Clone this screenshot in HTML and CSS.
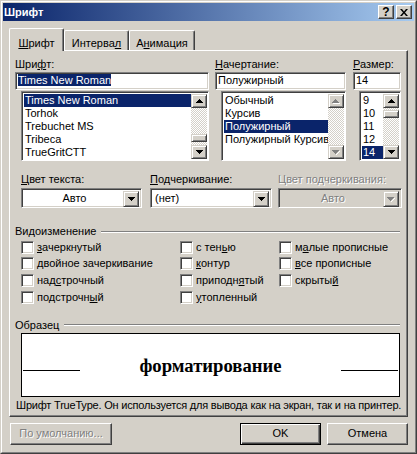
FILE: index.html
```html
<!DOCTYPE html>
<html lang="ru">
  <head>
    <meta charset="UTF-8" />
    <title>Шрифт</title>
    <link rel="stylesheet" href="styles.css">
  </head>

  <body>
    <div class="window">
      <div class="frame">
        <div class="titlebar">
          <span class="title">Шрифт</span>
          <div class="title-buttons">
            <span class="tbtn help">?</span>
            <span class="tbtn">
              <svg width="8" height="7" viewBox="0 0 8 7"><path d="M0 0h2l2 2.5L6 0h2L5 3.5 8 7H6L4 4.5 2 7H0l3-3.5z" /></svg>
            </span>
          </div>
        </div>

        <div class="content">
          <div class="tabs">
            <div class="tab tab-font active"><u>Ш</u>рифт</div>
            <div class="tab tab-space">Интерва<u>л</u></div>
            <div class="tab tab-anim">А<u>н</u>имация</div>
          </div>

          <div class="panel">
            <div class="font-row">
              <div class="col">
                <div class="label">Шри<u>ф</u>т:</div>
                <div class="edit"><span class="sel">Times New Roman</span></div>
                <div class="list">
                  <div class="items">
                    <div class="item selected">Times New Roman</div>
                    <div class="item">Torhok</div>
                    <div class="item">Trebuchet MS</div>
                    <div class="item">Tribeca</div>
                    <div class="item">TrueGritCTT</div>
                  </div>
                  <div class="scrollbar">
                    <div class="sbtn"><svg width="7" height="4" viewBox="0 0 7 4"><path d="M3 0h1v1h1v1h1v1h1v1H0V3h1V2h1V1h1z" /></svg></div>
                    <div class="track"><div class="thumb thumb-font"></div></div>
                    <div class="sbtn"><svg width="7" height="4" viewBox="0 0 7 4"><path d="M0 0h7v1H6v1H5v1H4v1H3V3H2V2H1V1H0z" /></svg></div>
                  </div>
                </div>
              </div>

              <div class="col">
                <div class="label"><u>Н</u>ачертание:</div>
                <div class="edit">Полужирный</div>
                <div class="list">
                  <div class="items">
                    <div class="item">Обычный</div>
                    <div class="item">Курсив</div>
                    <div class="item selected">Полужирный</div>
                    <div class="item">Полужирный Курсив</div>
                  </div>
                  <div class="scrollbar">
                    <div class="sbtn disabled"><svg width="8" height="5" viewBox="0 0 8 5"><path class="hl" d="M4 1h1v1h1v1h1v1h1v1H1V4h6V3H6V2H5V1z" /><path d="M3 0h1v1h1v1h1v1h1v1H0V3h1V2h1V1h1z" /></svg></div>
                    <div class="track"></div>
                    <div class="sbtn disabled"><svg width="8" height="5" viewBox="0 0 8 5"><path class="hl" d="M7 1h1v1H7v1H6v1H5v1H4V4h1V3h1V2h1z" /><path d="M0 0h7v1H6v1H5v1H4v1H3V3H2V2H1V1H0z" /></svg></div>
                  </div>
                </div>
              </div>

              <div class="col">
                <div class="label"><u>Р</u>азмер:</div>
                <div class="edit">14</div>
                <div class="list">
                  <div class="items">
                    <div class="item">9</div>
                    <div class="item">10</div>
                    <div class="item">11</div>
                    <div class="item">12</div>
                    <div class="item selected">14</div>
                  </div>
                  <div class="scrollbar">
                    <div class="sbtn"><svg width="7" height="4" viewBox="0 0 7 4"><path d="M3 0h1v1h1v1h1v1h1v1H0V3h1V2h1V1h1z" /></svg></div>
                    <div class="track"><div class="thumb thumb-size"></div></div>
                    <div class="sbtn"><svg width="7" height="4" viewBox="0 0 7 4"><path d="M0 0h7v1H6v1H5v1H4v1H3V3H2V2H1V1H0z" /></svg></div>
                  </div>
                </div>
              </div>
            </div>

            <div class="combo-row">
              <div>
                <div class="label"><u>Ц</u>вет текста:</div>
                <div class="combo">
                  <span class="value center">Авто</span>
                  <span class="drop"><svg width="7" height="4" viewBox="0 0 7 4"><path d="M0 0h7v1H6v1H5v1H4v1H3V3H2V2H1V1H0z" /></svg></span>
                </div>
              </div>
              <div>
                <div class="label"><u>П</u>одчеркивание:</div>
                <div class="combo">
                  <span class="value">(нет)</span>
                  <span class="drop"><svg width="7" height="4" viewBox="0 0 7 4"><path d="M0 0h7v1H6v1H5v1H4v1H3V3H2V2H1V1H0z" /></svg></span>
                </div>
              </div>
              <div>
                <div class="label disabled-text">Цвет подчеркивания:</div>
                <div class="combo disabled">
                  <span class="value center disabled-text">Авто</span>
                  <span class="drop disabled"><svg width="8" height="5" viewBox="0 0 8 5"><path class="hl" d="M7 1h1v1H7v1H6v1H5v1H4V4h1V3h1V2h1z" /><path d="M0 0h7v1H6v1H5v1H4v1H3V3H2V2H1V1H0z" /></svg></span>
                </div>
              </div>
            </div>

            <div class="group-head effects-head">
              <span>Видоизменение</span>
              <span class="etch"></span>
            </div>
            <div class="checks">
              <label class="check"><span class="box"></span><span><u>з</u>ачеркнутый</span></label>
              <label class="check"><span class="box"></span><span>с тен<u>ь</u>ю</span></label>
              <label class="check"><span class="box"></span><span>м<u>а</u>лые прописные</span></label>
              <label class="check"><span class="box"></span><span><u>д</u>войное зачеркивание</span></label>
              <label class="check"><span class="box"></span><span><u>к</u>онтур</span></label>
              <label class="check"><span class="box"></span><span><u>в</u>се прописные</span></label>
              <label class="check"><span class="box"></span><span>над<u>с</u>трочный</span></label>
              <label class="check"><span class="box"></span><span>приподн<u>я</u>тый</span></label>
              <label class="check"><span class="box"></span><span>скрыты<u>й</u></span></label>
              <label class="check"><span class="box"></span><span>подстрочн<u>ы</u>й</span></label>
              <label class="check"><span class="box"></span><span><u>у</u>топленный</span></label>
            </div>

            <div class="group-head sample-head">
              <span>Образец</span>
              <span class="etch"></span>
            </div>
            <div class="sample">
              <span class="rule"></span>
              <span class="sample-text">форматирование</span>
              <span class="rule"></span>
            </div>
            <div class="note">Шрифт TrueType. Он используется для вывода как на экран, так и на принтер.</div>
          </div>

          <div class="buttons">
            <div class="button wide disabled-text">По умолчанию...</div>
            <div class="button default">OK</div>
            <div class="button">Отмена</div>
          </div>
        </div>
      </div>
    </div>
  </body>
</html>
```

FILE: styles.css
```css
* {
  box-sizing: border-box;
}

body {
  margin: 0;
  background: #d4d0c8;
  font-family: "Liberation Sans", Arial, sans-serif;
  font-size: 11px;
  line-height: 13px;
  color: #000;
}

u {
  text-decoration: underline;
  text-underline-offset: 1px;
}

.window {
  width: 417px;
  height: 454px;
  background: #d4d0c8;
  border: 1px solid;
  border-color: #d4d0c8 #404040 #404040 #d4d0c8;
}

.frame {
  height: 100%;
  border: 1px solid;
  border-color: #fff #808080 #808080 #fff;
  padding: 1px;
}

/* title bar */
.titlebar {
  height: 18px;
  background: linear-gradient(to right, #0a246a, #a6caf0);
  display: flex;
  align-items: center;
  justify-content: space-between;
  padding: 0 2px 0 1px;
}

.title {
  color: #fff;
  font-weight: bold;
}

.title-buttons {
  display: flex;
  gap: 2px;
}

.tbtn {
  width: 16px;
  height: 14px;
  background: #d4d0c8;
  border: 1px solid;
  border-color: #fff #404040 #404040 #fff;
  box-shadow: inset -1px -1px #808080;
  display: flex;
  align-items: center;
  justify-content: center;
  font-weight: bold;
  font-size: 12px;
}

.tbtn.help {
  padding-top: 1px;
}

/* tabs */
.content {
  padding: 7px 6px 0 6px;
}

.tabs {
  display: flex;
  align-items: flex-end;
  height: 22px;
  position: relative;
  z-index: 1;
}

.tab {
  height: 20px;
  padding-top: 6px;
  text-align: center;
  background: #d4d0c8;
  border-top: 1px solid #fff;
  border-left: 1px solid #fff;
  border-right: 1px solid #404040;
  box-shadow: inset -1px 0 #808080;
  border-radius: 2px 2px 0 0;
}

.tab.active {
  height: 23px;
  margin-bottom: -1px;
  padding-top: 8px;
}

.tab-font {
  width: 55px;
}

.tab-space {
  width: 65px;
}

.tab-anim {
  width: 66px;
}

.panel {
  height: 367px;
  border: 1px solid;
  border-color: #fff #404040 #404040 #fff;
  box-shadow: inset -1px -1px #808080;
  padding: 7px 5px 0 5px;
}

/* font / style / size */
.font-row {
  display: grid;
  grid-template-columns: 194px 131px 49px;
  column-gap: 6px;
}

.font-row .col:last-child {
  margin-left: 1px;
}

.label {
  height: 13px;
  margin-bottom: 1px;
  white-space: nowrap;
}

.edit {
  height: 18px;
  background: #fff;
  border: 1px solid;
  border-color: #808080 #fff #fff #808080;
  box-shadow: inset 1px 1px #404040, inset -1px -1px #d4d0c8;
  padding: 1px 2px 0 2px;
  white-space: nowrap;
  overflow: hidden;
}

.sel {
  background: #0a246a;
  color: #fff;
}

.list {
  margin: 1px 0 0 6px;
  height: 70px;
  background: #fff;
  border: 1px solid;
  border-color: #808080 #fff #fff #808080;
  box-shadow: inset 1px 1px #404040;
  padding: 2px 1px 1px 2px;
  display: flex;
}

.items {
  flex: 1;
  min-width: 0;
}

.item {
  height: 13px;
  padding-left: 1px;
  white-space: nowrap;
  overflow: hidden;
}

.item.selected {
  background: #0a246a;
  color: #fff;
}

.scrollbar {
  width: 16px;
  display: flex;
  flex-direction: column;
}

.sbtn {
  height: 14px;
  background: #d4d0c8;
  border: 1px solid;
  border-color: #d4d0c8 #404040 #404040 #d4d0c8;
  box-shadow: inset 1px 1px #fff, inset -1px -1px #808080;
  display: flex;
  align-items: center;
  justify-content: center;
}

.sbtn.disabled path,
.drop.disabled path {
  fill: #808080;
}

.sbtn.disabled path.hl,
.drop.disabled path.hl {
  fill: #fff;
}

.track {
  flex: 1;
  background: repeating-conic-gradient(#fff 0 25%, #d4d0c8 0 50%) 0 0 / 2px 2px;
  position: relative;
}

.thumb {
  position: absolute;
  left: 0;
  right: 0;
  height: 8px;
  background: #d4d0c8;
  border: 1px solid;
  border-color: #d4d0c8 #404040 #404040 #d4d0c8;
  box-shadow: inset 1px 1px #fff, inset -1px -1px #808080;
}

.thumb-font {
  top: 26px;
}

.thumb-size {
  top: 2px;
}

/* combos */
.combo-row {
  display: grid;
  grid-template-columns: 121px 122px 122px;
  column-gap: 8px;
  margin: 12px 0 0 6px;
}

.combo-row > div:last-child {
  margin-left: -2px;
}

.combo-row .label {
  margin-bottom: 2px;
}

.combo {
  height: 20px;
  background: #fff;
  border: 1px solid;
  border-color: #808080 #fff #fff #808080;
  box-shadow: inset 1px 1px #404040, inset -1px -1px #d4d0c8;
  padding: 2px;
  display: flex;
}

.combo.disabled {
  background: #d4d0c8;
}

.value {
  flex: 1;
  padding: 1px 0 0 2px;
  white-space: nowrap;
}

.value.center {
  text-align: center;
}

.drop {
  width: 16px;
  height: 16px;
  background: #d4d0c8;
  border: 1px solid;
  border-color: #d4d0c8 #404040 #404040 #d4d0c8;
  box-shadow: inset 1px 1px #fff, inset -1px -1px #808080;
  display: flex;
  align-items: center;
  justify-content: center;
}

.disabled-text {
  color: #808080;
  text-shadow: 1px 1px #fff;
}

/* groups */
.group-head {
  display: flex;
  align-items: center;
  height: 13px;
  margin-right: 2px;
}

.effects-head {
  margin-top: 17px;
}

.sample-head {
  margin-top: 13px;
}

.etch {
  flex: 1;
  margin-left: 5px;
  height: 2px;
  border-top: 1px solid #808080;
  border-bottom: 1px solid #fff;
}

.checks {
  display: grid;
  grid-template-columns: 159px 99px 1fr;
  grid-auto-rows: 16.67px;
  margin: 1px 0 0 6px;
}

.check {
  display: flex;
  align-items: center;
  gap: 3px;
  white-space: nowrap;
}

.check:nth-child(10) {
  grid-column: 1;
}

.box {
  width: 13px;
  height: 13px;
  background: #fff;
  border: 1px solid;
  border-color: #808080 #fff #fff #808080;
  box-shadow: inset 1px 1px #404040, inset -1px -1px #d4d0c8;
}

.sample {
  margin: 1px 2px 0 6px;
  height: 64px;
  background: #fff;
  border: 1px solid #000;
  display: flex;
  align-items: center;
  justify-content: space-between;
  padding: 0 1px;
}

.rule {
  width: 57px;
  height: 1px;
  background: #000;
  margin-top: 12px;
}

.sample-text {
  font-family: "Liberation Serif", "Times New Roman", serif;
  font-weight: bold;
  font-size: 18.67px;
  line-height: 22px;
  margin-top: 2px;
}

.note {
  margin: 2px 0 0 1px;
  white-space: nowrap;
  letter-spacing: -0.2px;
}

/* bottom buttons */
.buttons {
  display: flex;
  gap: 6px;
  margin-top: 6px;
}

.button {
  width: 81px;
  height: 22px;
  background: #d4d0c8;
  border: 1px solid;
  border-color: #fff #404040 #404040 #fff;
  box-shadow: inset -1px -1px #808080;
  text-align: center;
  padding-top: 3px;
}

.button.wide {
  width: 102px;
  margin-left: 1px;
  margin-right: auto;
}

.button.default {
  border: 1px solid #000;
  box-shadow: inset 1px 1px #fff, inset -1px -1px #404040, inset -2px -2px #808080;
}
```
